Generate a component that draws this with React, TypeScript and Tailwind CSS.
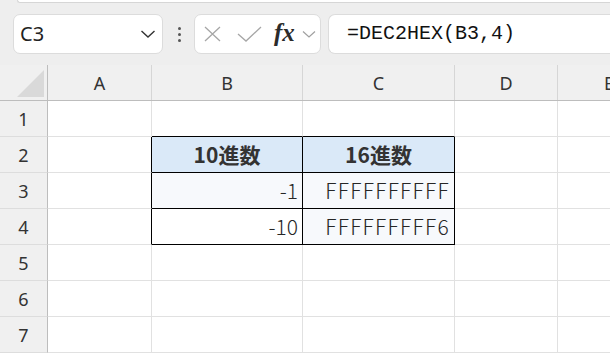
import React from "react";

const uiFont = { fontFamily: '"Noto Sans", "Open Sans", sans-serif' };
const cellFont = { fontFamily: '"Noto Sans CJK JP", "Noto Sans", sans-serif' };

const colWidths = ["w-[104px]", "w-[151px]", "w-[152px]", "w-[103px]", "w-[103px]"];
const colNames = ["A", "B", "C", "D", "E"];

type Cell = { text?: string; bold?: boolean; align?: "center" | "right"; bg?: string; wide?: boolean };

const data: Record<number, Record<number, Cell>> = {
  2: {
    1: { text: "10進数", bold: true, align: "center", bg: "bg-[#dae9f8]" },
    2: { text: "16進数", bold: true, align: "center", bg: "bg-[#dae9f8]" },
  },
  3: {
    1: { text: "-1", align: "right", bg: "bg-[#f7f9fc]" },
    2: { text: "FFFFFFFFFF", align: "right", bg: "bg-[#f7f9fc]", wide: true },
  },
  4: {
    1: { text: "-10", align: "right" },
    2: { text: "FFFFFFFFF6", align: "right", bg: "bg-[#f7f9fc]", wide: true },
  },
};

function GridCell({ r, c }: { r: number; c: number }) {
  const cell = data[r]?.[c];
  const rightBlack = r >= 2 && r <= 4 && c <= 2;
  const bottomBlack = (c === 1 || c === 2) && r >= 1 && r <= 4;
  return (
    <div
      className={[
        colWidths[c],
        "h-[36px] shrink-0 border-r border-b flex items-center overflow-hidden",
        rightBlack ? "border-r-black" : "border-r-[#e1e1e1]",
        bottomBlack ? "border-b-black" : "border-b-[#e1e1e1]",
        cell?.bg ?? "bg-white",
        cell?.align === "center" ? "justify-center" : "justify-end pr-[4px]",
      ].join(" ")}
    >
      {cell?.text && (
        <span
          style={cellFont}
          className={
            cell.bold
              ? "text-[21px] font-bold text-[#333333] leading-none"
              : cell.wide
              ? "text-[21px] font-light text-[#262626] leading-none tracking-[1.3px]"
              : "text-[21px] font-light text-[#262626] leading-none"
          }
        >
          {cell.text}
        </span>
      )}
    </div>
  );
}

export default function App() {
  return (
    <div className="w-[610px] h-[355px] overflow-hidden bg-white relative">
      {/* toolbar */}
      <div className="h-[65px] bg-[#eeeeee] relative">
        <div className="absolute top-0 left-[17px] right-0 h-[3px] bg-white border-b border-l border-[#d6d6d6] rounded-bl-[6px]" />
        <div className="flex items-center pt-[14px]">
          <div className="ml-[13px] w-[150px] h-[40px] bg-white border border-[#dcdcdc] rounded-[7px] flex items-center pl-[6px] pr-[6px]">
            <span style={uiFont} className="text-[20px] text-[#222] flex-1 leading-none">
              C3
            </span>
            <svg width="16" height="10" viewBox="0 0 16 10">
              <path d="M1.5 2 L8 8 L14.5 2" fill="none" stroke="#333" strokeWidth="1.4" />
            </svg>
          </div>
          <div className="ml-[14px] w-[5px] flex flex-col items-center gap-[3px]">
            <div className="w-[3px] h-[3px] rounded-full bg-[#555]" />
            <div className="w-[3px] h-[3px] rounded-full bg-[#555]" />
            <div className="w-[3px] h-[3px] rounded-full bg-[#555]" />
          </div>
          <div className="ml-[12px] w-[127px] h-[40px] bg-white border border-[#dcdcdc] rounded-[7px] flex items-center">
            <svg className="ml-[8px]" width="20" height="16" viewBox="0 0 20 16">
              <path d="M2 1 L17 15 M17 1 L2 15" stroke="#a6a6a6" strokeWidth="1.3" fill="none" />
            </svg>
            <svg className="ml-[14px]" width="26" height="16" viewBox="0 0 26 16">
              <path d="M1 8 L9 15 L24 1" stroke="#a6a6a6" strokeWidth="1.3" fill="none" />
            </svg>
            <span
              className="ml-[11px] italic font-bold text-[25px] text-[#2b2b2b] leading-none -mt-[4px]"
              style={{ fontFamily: '"Liberation Serif", serif' }}
            >
              fx
            </span>
            <svg className="ml-[6px]" width="16" height="10" viewBox="0 0 16 10">
              <path d="M2 2.5 L8 8 L14 2.5" fill="none" stroke="#a0a0a0" strokeWidth="1.2" />
            </svg>
          </div>
          <div className="ml-[7px] flex-1 h-[40px] bg-white border border-r-0 border-[#dcdcdc] rounded-l-[7px] flex items-center pl-[18px]">
            <span
              className="text-[20px] text-[#111] leading-none"
              style={{ fontFamily: '"Liberation Mono", monospace' }}
            >
              =DEC2HEX(B3,4)
            </span>
          </div>
        </div>
      </div>

      {/* column headers */}
      <div className="flex h-[36px] bg-[#f0f0f0] border-b border-[#bdbdbd]">
        <div className="w-[48px] shrink-0 border-r border-[#bdbdbd] relative">
          <svg className="absolute left-[17px] top-[5px]" width="28" height="28" viewBox="0 0 28 28">
            <path d="M27 0 L27 27 L0 27 Z" fill="#d9d9d9" />
          </svg>
        </div>
        {colNames.map((n, i) => (
          <div
            key={n}
            className={`${colWidths[i]} shrink-0 border-r border-[#d6d6d6] flex items-center justify-center`}
          >
            <span style={uiFont} className="text-[18px] text-[#333] leading-none">
              {n}
            </span>
          </div>
        ))}
      </div>

      {/* rows */}
      {[1, 2, 3, 4, 5, 6, 7].map((r) => (
        <div key={r} className="flex">
          <div className="w-[48px] h-[36px] shrink-0 bg-[#f0f0f0] border-r border-r-[#bdbdbd] border-b border-b-[#dddddd] flex items-center justify-center">
            <span style={uiFont} className="text-[18px] text-[#333] leading-none">
              {r}
            </span>
          </div>
          {colNames.map((n, c) => (
            <GridCell key={n} r={r} c={c} />
          ))}
        </div>
      ))}
    </div>
  );
}
